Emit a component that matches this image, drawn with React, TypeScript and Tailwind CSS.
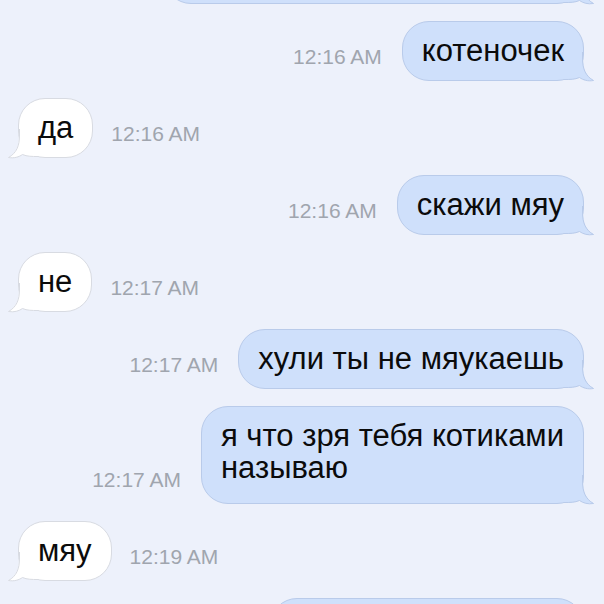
import React from "react";

type Msg = {
    text: string;
    time: string;
    out: boolean;
    extraBottom?: boolean;
};

const messages: Msg[] = [
    { text: "котеночек", time: "12:16 AM", out: true },
    { text: "да", time: "12:16 AM", out: false },
    { text: "скажи мяу", time: "12:16 AM", out: true },
    { text: "не", time: "12:17 AM", out: false },
    { text: "хули ты не мяукаешь", time: "12:17 AM", out: true },
    { text: "я что зря тебя котиками\nназываю", time: "12:17 AM", out: true, extraBottom: true },
    { text: "мяу", time: "12:19 AM", out: false },
];

// bubble tail, drawn for the outgoing side; incoming is mirrored
function Tail({ out }: { out: boolean }) {
    const fill = out ? "#cfe0fb" : "#ffffff";
    const stroke = out ? "#b9cbea" : "#d8dbe2";
    return (
        <svg
            width="30"
            height="30"
            viewBox="0 0 30 30"
            className={
                out
                    ? "absolute right-[-11px] bottom-[-2px]"
                    : "absolute left-[-11px] bottom-[-2px] -scale-x-100"
            }
        >
            <path
                d="M0 0 H19 V6 C19 17 22 24 30 28.5 C24 29.5 19 28 15.5 25.5 C11 27.5 6 28 0 28 Z"
                fill={fill}
            />
            <path
                d="M18.5 0 V6 C18.5 17 21.5 24 29.5 28.5 C24 29.5 19 28 15.5 25.5 C11 27.5 6 27.5 0 27.5"
                fill="none"
                stroke={stroke}
                strokeWidth="1"
            />
        </svg>
    );
}

function Bubble({ text, out, extraBottom }: { text: string; out: boolean; extraBottom?: boolean }) {
    return (
        <div
            className={
                "relative rounded-[27px] border px-[19px] pt-[13px] text-[31px] leading-[32px] text-[#0b0b0b] whitespace-pre-line " +
                (extraBottom ? "pb-[19px] " : "pb-[13px] ") +
                (out ? "bg-[#cfe0fb] border-[#b9cbea]" : "bg-white border-[#d8dbe2]")
            }
        >
            <span className="relative z-10">{text}</span>
            <Tail out={out} />
        </div>
    );
}

function Time({ time }: { time: string }) {
    return (
        <span className="mb-[12px] whitespace-nowrap text-[21px] leading-[24px] text-[#a0a5ae]">
            {time}
        </span>
    );
}

export default function App() {
    return (
        <div
            className="w-[604px] h-[604px] overflow-hidden bg-[#edf1fb] flex flex-col gap-[17px]"
            style={{ fontFamily: "'Liberation Sans', Arial, sans-serif" }}
        >
            {/* tail end of the previous message, cut off by the top edge */}
            <div className="flex justify-end pr-[20px] mt-[-56px]">
                <div className="w-[420px]">
                    <div className="relative h-[60px] rounded-[27px] border bg-[#cfe0fb] border-[#b9cbea]">
                        <Tail out />
                    </div>
                </div>
            </div>

            {messages.map((m, i) =>
                m.out ? (
                    <div key={i} className="flex items-end justify-end gap-[20px] pr-[20px]">
                        <Time time={m.time} />
                        <Bubble text={m.text} out extraBottom={m.extraBottom} />
                    </div>
                ) : (
                    <div key={i} className="flex items-end gap-[18px] pl-[18px]">
                        <Bubble text={m.text} out={false} />
                        <Time time={m.time} />
                    </div>
                )
            )}

            {/* next message, only its top shows */}
            <div className="flex justify-end pr-[20px]">
                <div className="w-[314px] h-[60px] rounded-[27px] border bg-[#cfe0fb] border-[#b9cbea]" />
            </div>
        </div>
    );
}
